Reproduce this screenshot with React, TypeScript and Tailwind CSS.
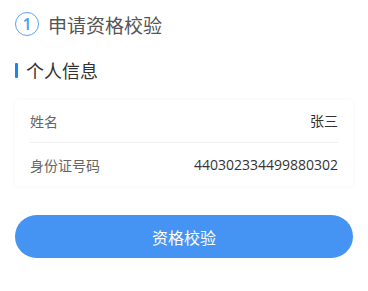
export default function App() {
  const rows = [
    { label: "姓名", value: "张三" },
    { label: "身份证号码", value: "440302334499880302" },
  ];

  return (
    <div
      className="w-[368px] h-[291px] bg-white px-[15px] pt-[12px]"
      style={{ fontFamily: '"Noto Sans CJK SC", "Noto Sans", sans-serif' }}
    >
      {/* Step title */}
      <div className="flex items-center h-[24px]">
        <div className="w-[24px] h-[24px] rounded-full border-[1.5px] border-[#5aa2f6] flex items-center justify-center text-[#4b9bf5] text-[16px] font-semibold leading-none font-['Open_Sans',sans-serif]">
          1
        </div>
        <span className="ml-[9px] text-[19px] leading-none text-[#555]">
          申请资格校验
        </span>
      </div>

      {/* Section heading */}
      <div className="flex items-center mt-[24px] h-[20px]">
        <span className="w-[3px] h-[15px] bg-[#1a86e8] rounded-[1px]" />
        <span className="ml-[8px] text-[18px] leading-none text-[#333]">
          个人信息
        </span>
      </div>

      {/* Info card */}
      <div className="mt-[20px] bg-white rounded-[4px] shadow-[0_0_5px_rgba(0,0,0,0.05)] px-[15px]">
        {rows.map((row, i) => (
          <div
            key={row.label}
            className={`flex items-center justify-between h-[43px] text-[14px] leading-none ${
              i < rows.length - 1 ? "border-b border-[#f0f0f0]" : ""
            }`}
          >
            <span className="text-[#666]">{row.label}</span>
            <span className="text-[#333] font-['Open_Sans','Noto_Sans_CJK_SC',sans-serif]">
              {row.value}
            </span>
          </div>
        ))}
      </div>

      <button className="mt-[29px] w-full h-[43px] rounded-full bg-[#4594f4] text-white text-[16px] leading-none">
        资格校验
      </button>
    </div>
  );
}
